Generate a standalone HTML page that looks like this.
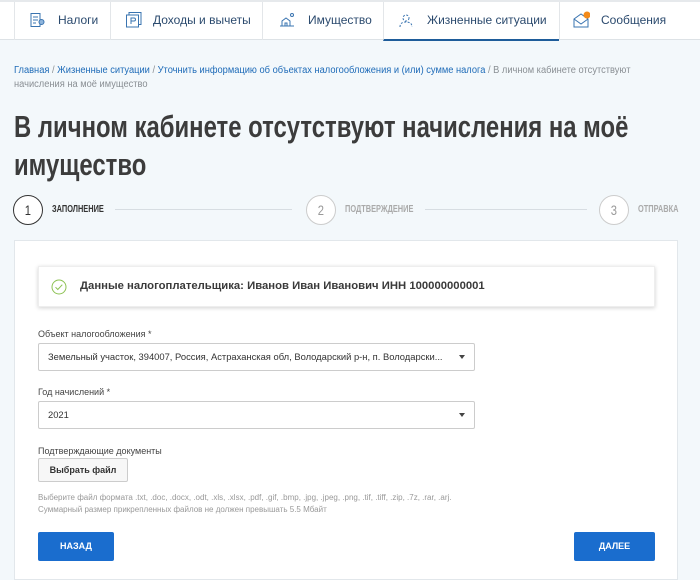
<!DOCTYPE html>
<html><head><meta charset="utf-8"><style>
*{margin:0;padding:0;box-sizing:border-box}
body{width:700px;height:574px;overflow:hidden;background:#f3f8fb;font-family:"Liberation Sans",sans-serif;color:#333;position:relative}
.nav{position:absolute;left:0;top:0;width:700px;height:40px;background:#fff;border-top:2px solid #e6e9ec;border-bottom:1px solid #dde2e6}
.tab{position:absolute;top:0;height:38px;border-left:1px solid #e3e6e9;font-size:12px;color:#2b4a6e;line-height:36px}
.tab svg{position:absolute;top:10px}
.tab span{position:absolute;top:0}
.ab{position:absolute}
.crumb{position:absolute;left:14px;top:64px;width:690px;font-size:10px;line-height:14px;color:#8a8f94;transform:scaleX(0.93);transform-origin:0 0}
.crumb a{color:#1e6bb8;text-decoration:none}
h1{position:absolute;left:14px;top:108px;font-size:31px;line-height:38px;font-weight:bold;color:#3c3c3c;width:860px;transform:scaleX(0.77);transform-origin:0 0}
.circ{position:absolute;width:30px;height:30px;border-radius:50%;border:1px solid #ccc;background:#fff;text-align:center;line-height:28px;font-size:14px;color:#999}
.circ b{display:inline-block;font-weight:normal;transform:scaleX(0.8)}
.sl{position:absolute;font-weight:bold;font-size:10px;color:#aaa;top:204px;transform:scaleX(0.74);transform-origin:0 0}
.line{position:absolute;top:209px;height:1px;background:#d7dde2}
.card{position:absolute;left:14px;top:240px;width:664px;height:340px;background:#fff;border:1px solid #e2e7eb}
.info{position:absolute;left:38px;top:266px;width:617px;height:41px;background:#fff;box-shadow:0 1px 4px rgba(0,0,0,.18);border:1px solid #eee}
.lbl{position:absolute;left:38px;font-size:9px;color:#444}
.sel{position:absolute;left:38px;width:437px;height:28px;border:1px solid #ccc;border-radius:2px;font-size:9.4px;line-height:26px;padding-left:9px;color:#333;background:#fff}
.sel:after{content:"";position:absolute;right:9px;top:11px;border:3.5px solid transparent;border-top:4px solid #444}
.btn{position:absolute;top:532px;height:29px;background:#1a6dce;color:#fff;font-size:9px;font-weight:bold;text-align:center;line-height:29px;border-radius:2px}
</style></head><body>
<div class="nav">
 <div class="tab" style="left:14px;width:97px"><svg width="16" height="16" viewBox="0 0 16 16" style="left:14px" fill="none" stroke="#3a74b0"><rect x="2" y="1.5" width="9" height="13"/><path d="M4 5h5M4 8h5M4 11h3"/><circle cx="12.5" cy="10" r="2.5" fill="#8fb5dc"/></svg><span style="left:43px">Налоги</span></div>
 <div class="tab" style="left:110px;width:152px"><svg width="18" height="18" viewBox="0 0 18 18" style="left:14px;top:9px" fill="none" stroke="#3a74b0"><rect x="4" y="1.5" width="12" height="12"/><rect x="1.5" y="4" width="12" height="12" fill="#fff"/><path d="M6 13V7h3a1.5 1.5 0 010 3H6"/></svg><span style="left:42px">Доходы и вычеты</span></div>
 <div class="tab" style="left:262px;width:121px"><svg width="18" height="16" viewBox="0 0 18 16" style="left:15px" fill="none" stroke="#3a74b0"><path d="M2 14h14M4 14V9l4-3 4 3v5M7 14v-3h2v3"/><circle cx="14" cy="3" r="1.5"/></svg><span style="left:45px">Имущество</span></div>
 <div class="tab" style="left:383px;width:176px;border-bottom:2px solid #1e5c9a;height:39px"><svg width="16" height="16" viewBox="0 0 16 16" style="left:14px" fill="none" stroke="#3a74b0" stroke-dasharray="2 1.5"><circle cx="8" cy="6" r="3"/><path d="M2 15c0-4 3-5 6-5s6 1 6 5"/></svg><span style="left:43px">Жизненные ситуации</span></div>
 <div class="tab" style="left:559px;width:141px"><svg width="18" height="18" viewBox="0 0 18 18" style="left:12px;top:9px" fill="none" stroke="#3a74b0"><path d="M2 8l7-5 7 5v8H2z"/><path d="M2 8l7 5 7-5"/><circle cx="15" cy="4" r="3.5" fill="#f28a1a" stroke="none"/></svg><span style="left:41px">Сообщения</span></div>
</div>
<div class="crumb"><a>Главная</a> / <a>Жизненные ситуации</a> / <a>Уточнить информацию об объектах налогообложения и (или) сумме налога</a> / В личном кабинете отсутствуют начисления на моё имущество</div>
<h1>В личном кабинете отсутствуют начисления на моё имущество</h1>
<div class="line" style="left:115px;width:177px"></div>
<div class="line" style="left:425px;width:162px"></div>
<div class="circ" style="left:13px;top:195px;border:1.5px solid #333;color:#333"><b>1</b></div>
<div class="sl" style="left:52px;color:#333">ЗАПОЛНЕНИЕ</div>
<div class="circ" style="left:306px;top:195px"><b>2</b></div>
<div class="sl" style="left:345px">ПОДТВЕРЖДЕНИЕ</div>
<div class="circ" style="left:599px;top:195px"><b>3</b></div>
<div class="sl" style="left:638px">ОТПРАВКА</div>
<div class="card"></div>
<div class="info"><svg class="ab" style="left:12px;top:12px" width="16" height="16" viewBox="0 0 16 16" fill="none" stroke="#8cc152"><circle cx="8" cy="8" r="7"/><path d="M4.5 8.2l2.3 2.3 4.5-4.8"/></svg><div class="ab" style="left:41px;top:13px;font-size:11.3px;font-weight:bold;color:#3a3a3a">Данные налогоплательщика: Иванов Иван Иванович ИНН 100000000001</div></div>
<div class="lbl" style="top:329px">Объект налогообложения *</div>
<div class="sel" style="top:343px">Земельный участок, 394007, Россия, Астраханская обл, Володарский р-н, п. Володарски...</div>
<div class="lbl" style="top:387px">Год начислений *</div>
<div class="sel" style="top:401px">2021</div>
<div class="lbl" style="top:446px">Подтверждающие документы</div>
<div class="ab" style="left:38px;top:458px;width:90px;height:24px;border:1px solid #ccc;border-radius:2px;background:#f7f7f7;font-size:9px;font-weight:bold;text-align:center;line-height:22px">Выбрать файл</div>
<div class="ab" style="left:38px;top:492px;font-size:8px;line-height:12px;color:#999">Выберите файл формата .txt, .doc, .docx, .odt, .xls, .xlsx, .pdf, .gif, .bmp, .jpg, .jpeg, .png, .tif, .tiff, .zip, .7z, .rar, .arj.<br>Суммарный размер прикрепленных файлов не должен превышать 5.5 Мбайт</div>
<div class="btn" style="left:38px;width:76px">НАЗАД</div>
<div class="btn" style="left:574px;width:81px">ДАЛЕЕ</div>
</body></html>
